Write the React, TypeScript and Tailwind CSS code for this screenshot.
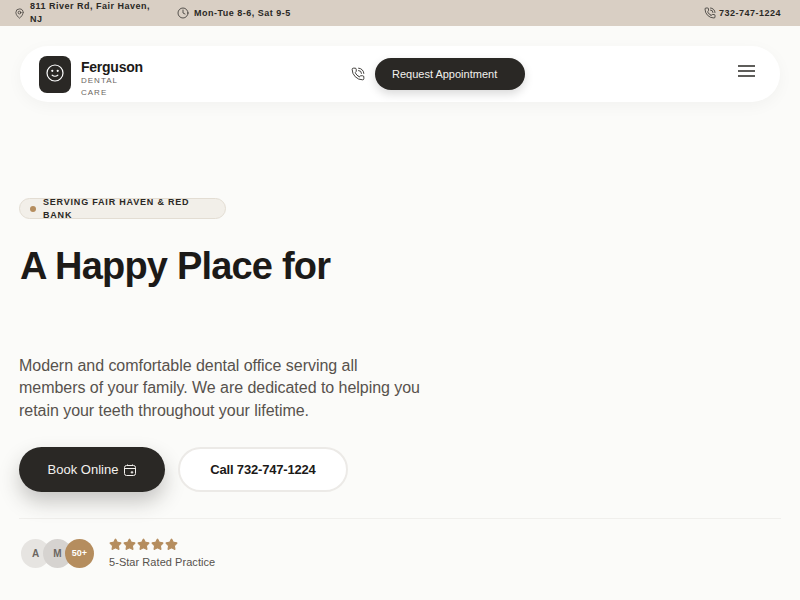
import { Clock, MapPin, PhoneCall, Star } from 'lucide-react';

const sans = "font-['Liberation_Sans',Arial,sans-serif]";

function Stars() {
  return (
    <div className="flex h-3 items-center gap-[1px]">
      {[0, 1, 2, 3, 4].map((i) => (
        <Star key={i} className="h-[13px] w-[13px] fill-[#b58d5e] text-[#b58d5e]" strokeWidth={2} />
      ))}
    </div>
  );
}

function CalendarIcon() {
  return (
    <svg viewBox="0 0 12 12" className="h-3 w-3" fill="none" stroke="currentColor" strokeWidth="1">
      <rect x="0.5" y="1.5" width="11" height="10" rx="2" />
      <path d="M0.5 4.5h11M3.5 0.5v1.5M8.5 0.5v1.5M8 7v2.6M6.7 8.3h2.6" />
    </svg>
  );
}

function Burger() {
  return (
    <svg viewBox="0 0 17 12" className="h-3 w-[17px]" stroke="#2a2825" strokeWidth="1.5">
      <path d="M0 1h17M0 6h17M0 11h17" />
    </svg>
  );
}

function Face() {
  return (
    <svg viewBox="0 0 18 18" className="h-[18px] w-[18px]" fill="none" stroke="white" strokeWidth="1.2" strokeLinecap="round">
      <circle cx="9" cy="9" r="8" />
      <path d="M6.2 11.2c1.5 1.3 4.1 1.3 5.6 0" />
      <circle cx="6.3" cy="6.8" r="0.5" fill="white" />
      <circle cx="11.7" cy="6.8" r="0.5" fill="white" />
    </svg>
  );
}

export default function App() {
  return (
    <div className={`${sans} h-[600px] w-[800px] overflow-hidden bg-[#fbfbf9] text-[#1c1a18]`}>
      <div className="flex h-[26px] items-center justify-between bg-[#d9cfc4] pl-[14px] pr-[19px] text-[9px] font-bold leading-[13px] tracking-[0.5px] text-[#2a2825]">
        <div className="flex items-center">
          <div className="flex w-[163px] items-center gap-[5px]">
            <MapPin className="h-[11px] w-[11px] shrink-0" strokeWidth={1.5} />
            <span className="w-[125px]">811 River Rd, Fair Haven, NJ</span>
          </div>
          <div className="flex items-center gap-[5px]">
            <Clock className="h-3 w-3" strokeWidth={1.5} />
            <span>Mon-Tue 8-6, Sat 9-5</span>
          </div>
        </div>
        <div className="flex items-center gap-[3px]">
          <PhoneCall className="h-3 w-3" strokeWidth={1.5} />
          <span>732-747-1224</span>
        </div>
      </div>

      <div className="px-5 pt-5">
        <nav className="flex h-[56px] items-center rounded-[28px] bg-white pl-[19px] pr-[25px] shadow-[0_4px_16px_rgba(0,0,0,0.04)]">
          <div className="flex w-[312px] items-center gap-[10px]">
            <div className="flex h-[37px] w-8 items-center justify-center rounded-lg bg-[#2a2825] pb-[3px]">
              <Face />
            </div>
            <div className="pt-[11px]">
              <div className="text-[14px] font-bold leading-[15px] tracking-[-0.25px]">Ferguson</div>
              <div className="text-[8px] leading-[12px] tracking-[1px] text-[#6b6661]">
                DENTAL
                <br />
                CARE
              </div>
            </div>
          </div>
          <div className="flex items-center gap-[10px]">
            <PhoneCall className="h-[14px] w-[14px] text-[#2a2825]" strokeWidth={1.5} />
            <button className="flex h-8 w-[150px] items-center rounded-2xl bg-[#2a2825] pl-[17px] text-[11px] text-[#f3f1ee] shadow-[0_4px_10px_rgba(0,0,0,0.15)]">
              Request Appointment
            </button>
          </div>
          <div className="flex flex-1 justify-end pb-[6px]">
            <Burger />
          </div>
        </nav>
      </div>

      <main className="px-[19px] pt-[96px]">
        <div className="flex h-[21px] w-[207px] items-center gap-[7px] rounded-full border border-[#e3ddd3] bg-[#f2efe9] pl-[10px] text-[9px] font-bold leading-[13px] tracking-[0.8px] text-[#2a2825]">
          <span className="h-[6px] w-[6px] shrink-0 rounded-full bg-[#b58d5e]" />
          <span className="w-[165px]">SERVING FAIR HAVEN &amp; RED BANK</span>
        </div>
        <h1 className="mt-[24px] h-[111.5px] pl-[1px] text-[38px] font-bold leading-[46px] tracking-[-0.8px] text-[#1c1a18]">
          A Happy Place for
        </h1>
        <p className="w-[403px] text-[16px] leading-[22.5px] tracking-[-0.04px] text-[#57524d]">
          Modern and comfortable dental office serving all members of your family. We are dedicated to helping you retain your teeth throughout your lifetime.
        </p>
        <div className="mt-[25px] flex items-center gap-[13px]">
          <button className="flex h-[45px] w-[146px] items-center justify-center gap-[6px] rounded-full bg-[#2a2825] text-[13px] text-[#f3f1ee] shadow-[0_10px_20px_rgba(42,40,37,0.25)]">
            Book Online
            <CalendarIcon />
          </button>
          <button className="h-[45px] w-[170px] rounded-full border-2 border-[#eceae7] bg-white text-[13px] font-bold tracking-[-0.18px] text-[#1c1a18]">
            Call 732-747-1224
          </button>
        </div>
        <div className="mt-[26px] flex items-center border-t border-[#f0efec] pt-[19px]">
          <div className="flex items-center pl-[2px]">
            <div className="flex h-[29px] w-[29px] items-center justify-center rounded-full bg-[#e6e4e1] text-[10px] font-bold text-[#6b6661]">A</div>
            <div className="-ml-[7px] flex h-[29px] w-[29px] items-center justify-center rounded-full bg-[#d6d3d0] text-[10px] font-bold text-[#6b6661]">M</div>
            <div className="-ml-[7px] flex h-[29px] w-[29px] items-center justify-center rounded-full bg-[#b58d5e] text-[9px] font-bold text-white">50+</div>
          </div>
          <div className="ml-[15px]">
            <Stars />
            <div className="mt-[6px] text-[11px] leading-[13px] tracking-[0.05px] text-[#57524d]">5-Star Rated Practice</div>
          </div>
        </div>
      </main>
    </div>
  );
}
